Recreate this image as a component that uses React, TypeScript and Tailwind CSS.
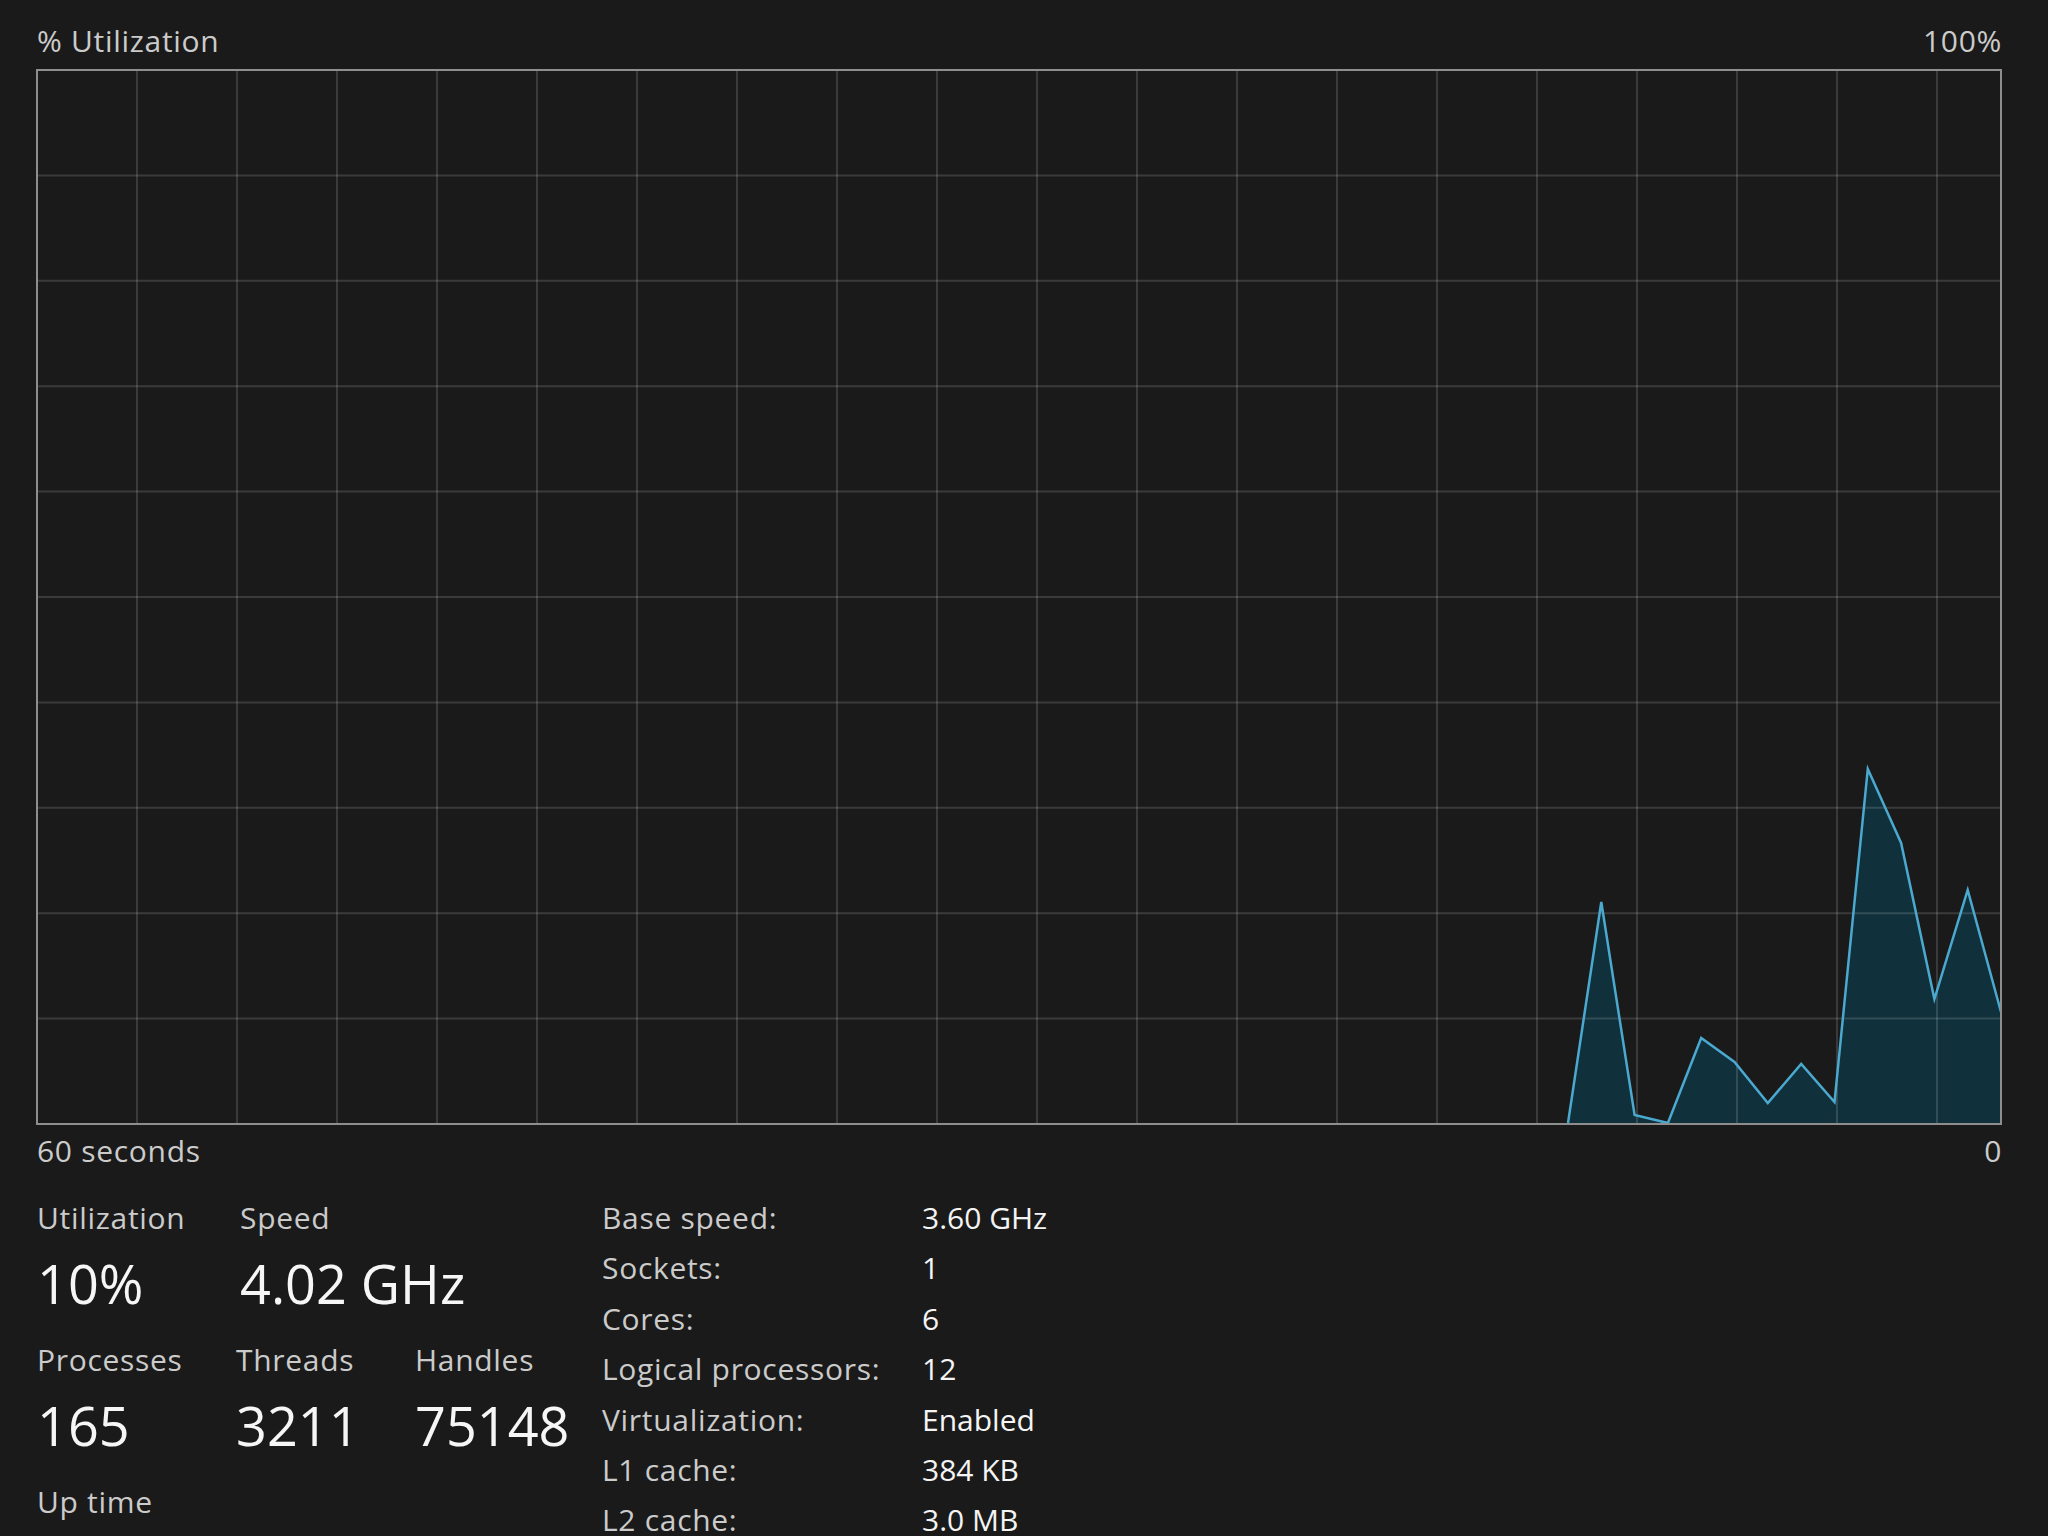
import React from 'react';

const W = 1966;
const H = 1056;

// samples of the last ~14 seconds, in chart coordinates (y from top)
const samples = [1054, 833, 1046, 1054, 969, 993, 1034, 995, 1033, 700, 774, 930, 821, 943];

const UtilizationChart: React.FC = () => {
  const step = (W - 1 - 1532) / (samples.length - 1);
  const pts = samples.map((y, i) => `${(1532 + i * step).toFixed(1)},${y}`);
  const line = pts.join(' ');
  const area = `1532,${H - 2} ${line} ${W - 1},${H - 2}`;

  const vLines = Array.from({ length: 19 }, (_, i) => 101 + i * 100);
  const hLines = Array.from({ length: 9 }, (_, i) => 1 + (i + 1) * 105.4);

  return (
    <svg width={W} height={H} viewBox={`0 0 ${W} ${H}`} className="block">
      <polygon points={area} fill="#10303b" />
      {vLines.map((x) => (
        <line key={`v${x}`} x1={x} y1={2} x2={x} y2={H - 2} stroke="#ffffff" strokeOpacity={0.14} strokeWidth={2} />
      ))}
      {hLines.map((y) => (
        <line key={`h${y}`} x1={2} y1={y} x2={W - 2} y2={y} stroke="#ffffff" strokeOpacity={0.14} strokeWidth={2} />
      ))}
      <polyline points={line} fill="none" stroke="#4ba9cf" strokeWidth={2.5} strokeLinejoin="miter" />
      <rect x={1} y={1} width={W - 2} height={H - 2} fill="none" stroke="#8e8e8e" strokeWidth={2} />
    </svg>
  );
};

const Stat: React.FC<{ label: string; value: string; width: string }> = ({ label, value, width }) => (
  <div className={width}>
    <div className="leading-[50px] text-[#cbcbcb] tracking-[0.7px]">{label}</div>
    <div className="pt-[4px] text-[54px] leading-[73px] text-[#f6f6f6]">{value}</div>
  </div>
);

const details: [string, string][] = [
  ['Base speed:', '3.60 GHz'],
  ['Sockets:', '1'],
  ['Cores:', '6'],
  ['Logical processors:', '12'],
  ['Virtualization:', 'Enabled'],
  ['L1 cache:', '384 KB'],
  ['L2 cache:', '3.0 MB'],
];

export default function App() {
  return (
    <div
      className="w-[2048px] h-[1536px] overflow-hidden bg-[#1a1a1a] pl-[36px] pr-[46px] text-[30px] text-[#cbcbcb]"
      style={{ fontFamily: '"Open Sans", "Noto Sans", sans-serif' }}
    >
      <div className="flex justify-between pt-[21px] leading-[40px] mb-[8px] tracking-[0.7px]">
        <span className="pl-[1px]">% Utilization</span>
        <span>100%</span>
      </div>

      <UtilizationChart />

      <div className="flex justify-between leading-[40px] mt-[6px] mb-[22px] tracking-[0.7px]">
        <span className="pl-[1px]">60 seconds</span>
        <span>0</span>
      </div>

      <div className="flex">
        <div className="w-[566px] pl-[1px]">
          <div className="flex pb-[15px]">
            <Stat label="Utilization" value="10%" width="w-[203px]" />
            <Stat label="Speed" value="4.02 GHz" width="w-[240px]" />
          </div>
          <div className="flex pb-[15px]">
            <Stat label="Processes" value="165" width="w-[199px]" />
            <Stat label="Threads" value="3211" width="w-[179px]" />
            <Stat label="Handles" value="75148" width="w-[170px]" />
          </div>
          <div className="leading-[50px] tracking-[0.7px]">Up time</div>
        </div>

        <div className="grid grid-cols-[320px_auto] leading-[50.4px] tracking-[0.7px]">
          {details.map(([k, v]) => (
            <React.Fragment key={k}>
              <div className="text-[#cbcbcb]">{k}</div>
              <div className="text-[#f4f4f4] tracking-normal">{v}</div>
            </React.Fragment>
          ))}
        </div>
      </div>
    </div>
  );
}
